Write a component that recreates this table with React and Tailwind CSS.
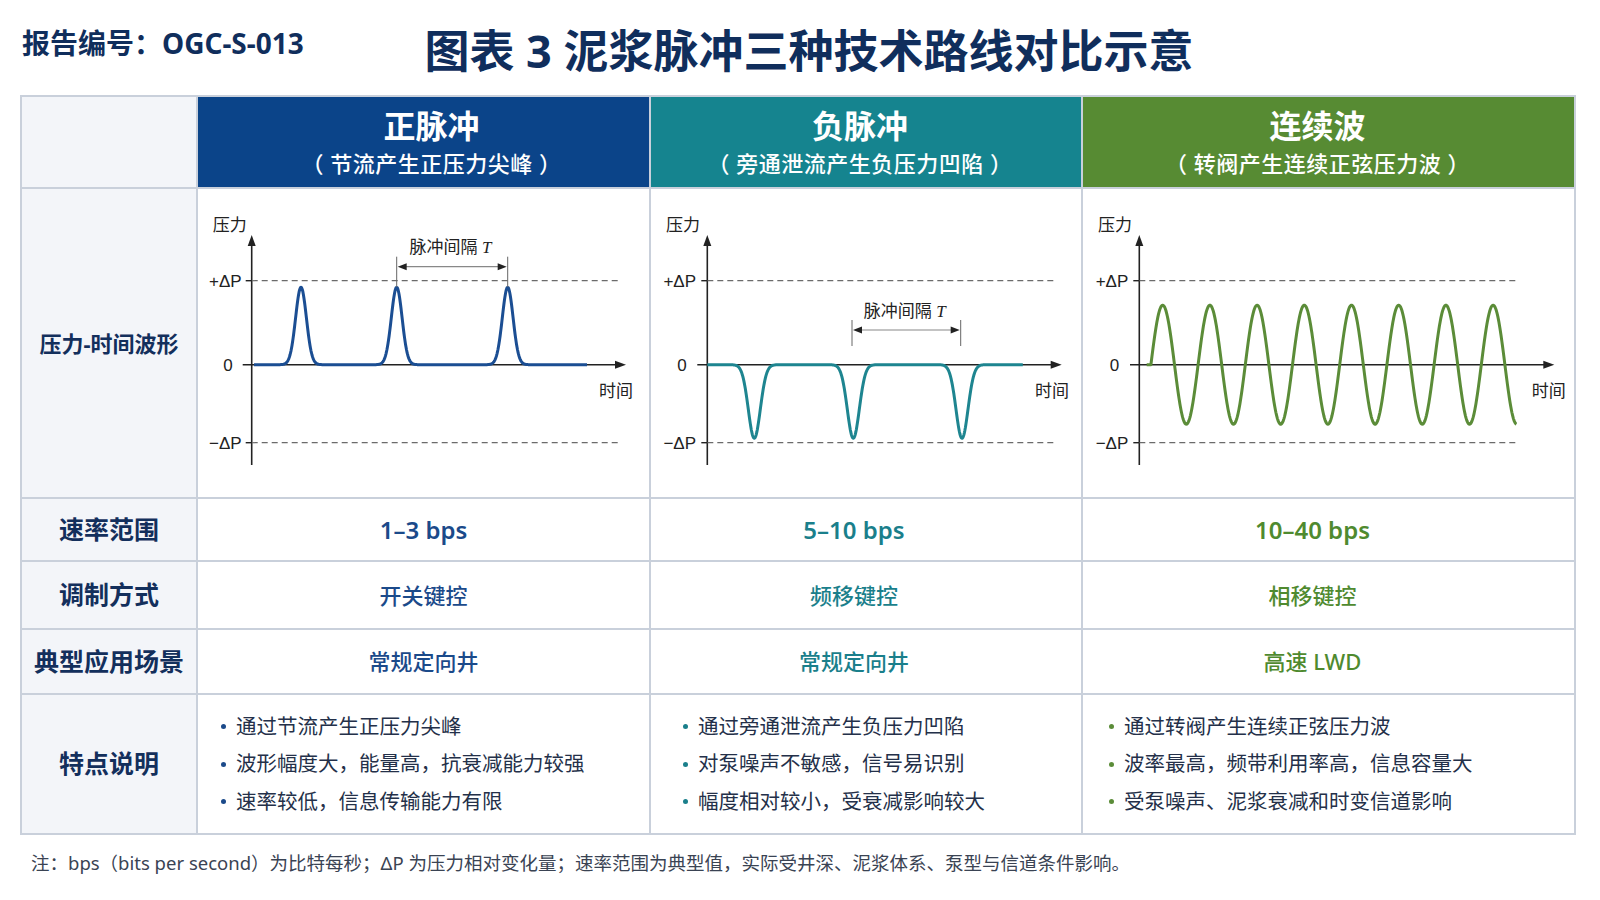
import React from 'react';

const CJK = "'Noto Sans', 'Noto Sans CJK SC', sans-serif";
const LAT = "'Liberation Sans', 'DejaVu Sans', sans-serif";

const Y0 = 364.7;
const YP = 280.7;
const YN = 442.7;

// pulse train along the zero line, amp>0 for peaks, amp<0 for dips
function pulsePath(x0, x1, centers, amp, sigma) {
  let d = '';
  for (let x = x0; x <= x1; x += 0.5) {
    let v = 0;
    centers.forEach((c) => {
      v += Math.exp(-((x - c) * (x - c)) / (2 * sigma * sigma));
    });
    const y = Y0 - amp * v;
    d += (d ? 'L' : 'M') + x.toFixed(1) + ',' + y.toFixed(1);
  }
  return d;
}

function sinePath(xs, xz, xe, amp, period) {
  let d = `M${xs},${Y0}L${xz},${Y0}`;
  for (let x = xz; x <= xe; x += 0.5) {
    const y = Y0 - amp * Math.sin((2 * Math.PI * (x - xz)) / period);
    d += 'L' + x.toFixed(1) + ',' + y.toFixed(1);
  }
  return d;
}

const Axes = ({ ax, dashEnd, xStart, xTip, plusEnd, zeroEnd, pressX, timeX }) => (
  <g>
    <text x={pressX} y={231} fontSize="17" fill="#222" fontFamily={CJK}>压力</text>
    <line x1={ax} y1={244} x2={ax} y2={465} stroke="#222" strokeWidth="1.6" />
    <polygon points={`${ax},235 ${ax - 4},246 ${ax + 4},246`} fill="#222" />
    <line x1={ax} y1={YP} x2={dashEnd} y2={YP} stroke="#6b6b6b" strokeWidth="1.2" strokeDasharray="6 4" />
    <line x1={ax} y1={YN} x2={dashEnd} y2={YN} stroke="#6b6b6b" strokeWidth="1.2" strokeDasharray="6 4" />
    <line x1={ax - 6} y1={YP} x2={ax} y2={YP} stroke="#222" strokeWidth="1.4" />
    <line x1={ax - 6} y1={YN} x2={ax} y2={YN} stroke="#222" strokeWidth="1.4" />
    <line x1={xStart} y1={Y0} x2={xTip - 8} y2={Y0} stroke="#222" strokeWidth="1.6" />
    <polygon points={`${xTip},${Y0} ${xTip - 11},${Y0 - 4} ${xTip - 11},${Y0 + 4}`} fill="#222" />
    <text x={plusEnd} y={287} textAnchor="end" fontSize="17" fill="#222" fontFamily={LAT}>+ΔP</text>
    <text x={zeroEnd} y={371} textAnchor="end" fontSize="17" fill="#222" fontFamily={LAT}>0</text>
    <text x={plusEnd} y={449} textAnchor="end" fontSize="17" fill="#222" fontFamily={LAT}>−ΔP</text>
    <text x={timeX} y={396.5} fontSize="17" fill="#222" fontFamily={CJK}>时间</text>
  </g>
);

const Interval = ({ x1, x2, top, bottom, ay, labelX, labelY }) => (
  <g>
    <line x1={x1} y1={top} x2={x1} y2={bottom} stroke="#666" strokeWidth="1" />
    <line x1={x2} y1={top} x2={x2} y2={bottom} stroke="#666" strokeWidth="1" />
    <line x1={x1 + 6} y1={ay} x2={x2 - 6} y2={ay} stroke="#888" strokeWidth="1.2" />
    <polygon points={`${x1 + 1},${ay} ${x1 + 10},${ay - 3.5} ${x1 + 10},${ay + 3.5}`} fill="#222" />
    <polygon points={`${x2 - 1},${ay} ${x2 - 10},${ay - 3.5} ${x2 - 10},${ay + 3.5}`} fill="#222" />
    <text x={labelX} y={labelY} textAnchor="middle" fontSize="17" fill="#222" fontFamily={CJK}>
      脉冲间隔 <tspan fontFamily="'Liberation Serif', serif" fontStyle="italic">T</tspan>
    </text>
  </g>
);

const ChartBox = ({ ox, w, children }) => (
  <svg width={w} height="308" viewBox={`0 0 ${w} 308`} className="block">
    <g transform={`translate(${-ox},-189)`}>{children}</g>
  </svg>
);

const PositiveChart = () => (
  <ChartBox ox={198} w={451}>
    <Axes ax={251.7} dashEnd={620} xStart={242.7} xTip={626} plusEnd={241.7} zeroEnd={232.7} pressX={212.7} timeX={599} />
    <path d={pulsePath(254, 587.3, [301, 396.7, 507.7], 77.4, 5.4)} fill="none" stroke="#1b4e93" strokeWidth="3" strokeLinejoin="round" />
    <Interval x1={396.7} x2={507.7} top={256.7} bottom={287} ay={266.7} labelX={450.5} labelY={253} />
  </ChartBox>
);

const NegativeChart = () => (
  <ChartBox ox={651} w={430}>
    <Axes ax={707.3} dashEnd={1055} xStart={697.3} xTip={1061.7} plusEnd={696} zeroEnd={686.7} pressX={666} timeX={1035} />
    <path d={pulsePath(707.3, 1023, [754.3, 853.3, 962], -73.6, 6)} fill="none" stroke="#1e8590" strokeWidth="3" strokeLinejoin="round" />
    <Interval x1={852} x2={960.7} top={320} bottom={346} ay={330} labelX={904.7} labelY={317} />
  </ChartBox>
);

const ContinuousChart = () => (
  <ChartBox ox={1083} w={491}>
    <Axes ax={1139.3} dashEnd={1519.3} xStart={1130} xTip={1554.3} plusEnd={1128.3} zeroEnd={1119.3} pressX={1098} timeX={1531.7} />
    <path d={sinePath(1146.7, 1150.9, 1516.7, 59.5, 47.2)} fill="none" stroke="#5b8c38" strokeWidth="3" strokeLinejoin="round" />
  </ChartBox>
);

const columns = [
  {
    title: '正脉冲',
    sub: '（ 节流产生正压力尖峰 ）',
    head: 'bg-[#0b4489] pl-[16px]',
    text: 'text-[#1b4a8a]',
    dot: 'bg-[#1b4a8a]',
    pad: 'pl-[23px]',
    shift: '',
    chart: <PositiveChart />,
    rate: '1–3 bps',
    mod: '开关键控',
    use: '常规定向井',
    notes: ['通过节流产生正压力尖峰', '波形幅度大，能量高，抗衰减能力较强', '速率较低，信息传输能力有限'],
  },
  {
    title: '负脉冲',
    sub: '（ 旁通泄流产生负压力凹陷 ）',
    head: 'bg-[#15848f] pr-[12px]',
    text: 'text-[#1a7f8b]',
    dot: 'bg-[#1a7f8b]',
    pad: 'pl-[32px]',
    shift: 'pr-[24px]',
    chart: <NegativeChart />,
    rate: '5–10 bps',
    mod: '频移键控',
    use: '常规定向井',
    notes: ['通过旁通泄流产生负压力凹陷', '对泵噪声不敏感，信号易识别', '幅度相对较小，受衰减影响较大'],
  },
  {
    title: '连续波',
    sub: '（ 转阀产生连续正弦压力波 ）',
    head: 'bg-[#578b33] pr-[22px]',
    text: 'text-[#4f8a2f]',
    dot: 'bg-[#5b8c38]',
    pad: 'pl-[26px]',
    shift: 'pr-[32px]',
    chart: <ContinuousChart />,
    rate: '10–40 bps',
    mod: '相移键控',
    use: '高速 LWD',
    notes: ['通过转阀产生连续正弦压力波', '波率最高，频带利用率高，信息容量大', '受泵噪声、泥浆衰减和时变信道影响'],
  },
];

const RowLabel = ({ children, small }) => (
  <div
    className={`bg-[#f3f5f9] flex items-center justify-center font-bold text-[#132f5c] ${
      small ? 'text-[22px]' : 'text-[25px]'
    }`}
  >
    {children}
  </div>
);

export default function App() {
  return (
    <div className="w-[1600px] h-[900px] overflow-hidden bg-white font-['Noto_Sans','Noto_Sans_CJK_SC',sans-serif]">
      {/* Header */}
      <div className="grid grid-cols-[1fr_auto_1fr] h-[95px] pl-[22px] pr-[4px] pt-[23px]">
        <div className="text-[28px] leading-[40px] font-bold text-[#102e5c] whitespace-nowrap">报告编号：OGC-S-013</div>
        <h1 className="text-[45px] leading-[56px] font-bold text-[#102e5c] whitespace-nowrap">
          图表 3 泥浆脉冲三种技术路线对比示意
        </h1>
        <div />
      </div>

      {/* Comparison table */}
      <div className="ml-[20px] w-[1556px] grid grid-cols-[174px_451px_430px_491px] grid-rows-[90px_308px_61px_66px_63px_138px] gap-[2px] p-[2px] bg-[#c9d0db]">
        <div className="bg-[#f3f5f9]" />
        {columns.map((c) => (
          <div key={c.title} className={`${c.head} flex flex-col items-center justify-center text-white`}>
            <div className="text-[32px] leading-[36px] font-bold">{c.title}</div>
            <div className="mt-[5px] text-[22px] leading-[28px] font-medium tracking-[0.5px] whitespace-pre">{c.sub}</div>
          </div>
        ))}

        <RowLabel small>压力-时间波形</RowLabel>
        {columns.map((c) => (
          <div key={c.title + 'chart'} className="bg-white">
            {c.chart}
          </div>
        ))}

        <RowLabel>速率范围</RowLabel>
        {columns.map((c) => (
          <div key={c.title + 'rate'} className={`bg-white flex items-center justify-center text-[24px] font-semibold ${c.text} ${c.shift}`}>
            {c.rate}
          </div>
        ))}

        <RowLabel>调制方式</RowLabel>
        {columns.map((c) => (
          <div key={c.title + 'mod'} className={`bg-white flex items-center justify-center text-[22px] font-medium ${c.text} ${c.shift}`}>
            {c.mod}
          </div>
        ))}

        <RowLabel>典型应用场景</RowLabel>
        {columns.map((c) => (
          <div key={c.title + 'use'} className={`bg-white flex items-center justify-center text-[22px] font-medium ${c.text} ${c.shift}`}>
            {c.use}
          </div>
        ))}

        <RowLabel>特点说明</RowLabel>
        {columns.map((c) => (
          <div key={c.title + 'notes'} className={`bg-white flex flex-col justify-center ${c.pad}`}>
            {c.notes.map((n) => (
              <div key={n} className="flex items-center gap-[10px] text-[20.5px] leading-[37.5px] text-[#243049] whitespace-nowrap">
                <span className={`w-[5px] h-[5px] rounded-full ${c.dot}`} />
                {n}
              </div>
            ))}
          </div>
        ))}
      </div>

      {/* Footnote */}
      <p className="ml-[31px] mt-[14px] text-[18.5px] leading-[28px] text-[#3a4353] whitespace-nowrap">
        注：bps（bits per second）为比特每秒；ΔP 为压力相对变化量；速率范围为典型值，实际受井深、泥浆体系、泵型与信道条件影响。
      </p>
    </div>
  );
}
